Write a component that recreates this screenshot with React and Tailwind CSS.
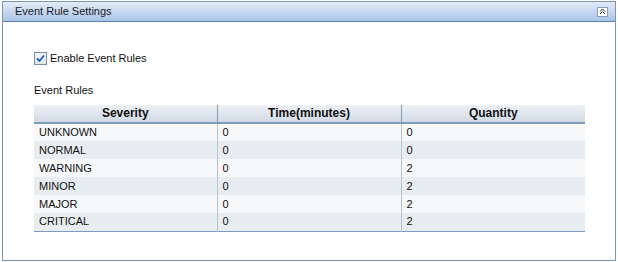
import React from 'react';

const rows = [
    ['UNKNOWN', '0', '0'],
    ['NORMAL', '0', '0'],
    ['WARNING', '0', '2'],
    ['MINOR', '0', '2'],
    ['MAJOR', '0', '2'],
    ['CRITICAL', '0', '2'],
];

const App = () => {
    return (
        <div className="w-[618px] h-[262px] bg-white pl-[2px] pt-[1px] text-[11px] leading-[13px] text-[#111] font-['Liberation_Sans',Arial,sans-serif]">
            <div className="w-[614px] h-[260px] border border-[#7b96b5] flex flex-col">
                {/* Header */}
                <div className="h-[20px] shrink-0 flex items-center justify-between pl-[12px] pr-[7px] bg-gradient-to-b from-[#e3ecf7] to-[#a9c4e6] border-b border-[#5f80a8]">
                    <span className="text-[#1a1a2a]">Event Rule Settings</span>
                    <div className="w-[11px] h-[10px] bg-white border border-[#8a9fb8] flex items-center justify-center">
                        <svg width="7" height="7" viewBox="0 0 7 7">
                            <path d="M1 3.5 L3.5 1 L6 3.5 M1 6 L3.5 3.5 L6 6" fill="none" stroke="#222" strokeWidth="1" />
                        </svg>
                    </div>
                </div>

                {/* Content */}
                <div className="pl-[31px] pt-[30px] flex flex-col">
                    <label className="flex items-center h-[13px]">
                        <span className="w-[13px] h-[13px] border border-[#7a8ea8] bg-gradient-to-b from-[#f2f5f9] to-[#dfe6ee] flex items-center justify-center">
                            <svg width="11" height="11" viewBox="0 0 11 11">
                                <path d="M2 5.5 L4.5 8 L9 2.5" fill="none" stroke="#1f5bc4" strokeWidth="1.8" />
                            </svg>
                        </span>
                        <span className="ml-[3px]">Enable Event Rules</span>
                    </label>

                    <div className="mt-[18px] h-[14px] flex items-center">Event Rules</div>

                    <table className="mt-[8px] w-[551px] border-collapse table-fixed">
                        <thead>
                            <tr className="bg-gradient-to-b from-[#eef1f5] to-[#cfd9e4]">
                                <th className="w-[183px] h-[18px] font-bold text-[12px] text-center border-b-2 border-[#7f9bb9] p-0">Severity</th>
                                <th className="w-[184px] h-[18px] font-bold text-[12px] text-center border-b-2 border-l border-[#7f9bb9] p-0">Time(minutes)</th>
                                <th className="h-[18px] font-bold text-[12px] text-center border-b-2 border-l border-[#7f9bb9] p-0">Quantity</th>
                            </tr>
                        </thead>
                        <tbody className="border-b border-[#7f9bb9]">
                            {rows.map((r, i) => (
                                <tr key={r[0]} className={i % 2 === 0 ? 'bg-[#f6f8fa]' : 'bg-[#e8edf2]'}>
                                    <td className="h-[18px] px-[5px] py-0">{r[0]}</td>
                                    <td className="h-[18px] px-[5px] py-0 border-l border-[#b4c3d4]">{r[1]}</td>
                                    <td className="h-[18px] px-[5px] py-0 border-l border-[#b4c3d4]">{r[2]}</td>
                                </tr>
                            ))}
                        </tbody>
                    </table>
                </div>
            </div>
        </div>
    );
};

export default App;
